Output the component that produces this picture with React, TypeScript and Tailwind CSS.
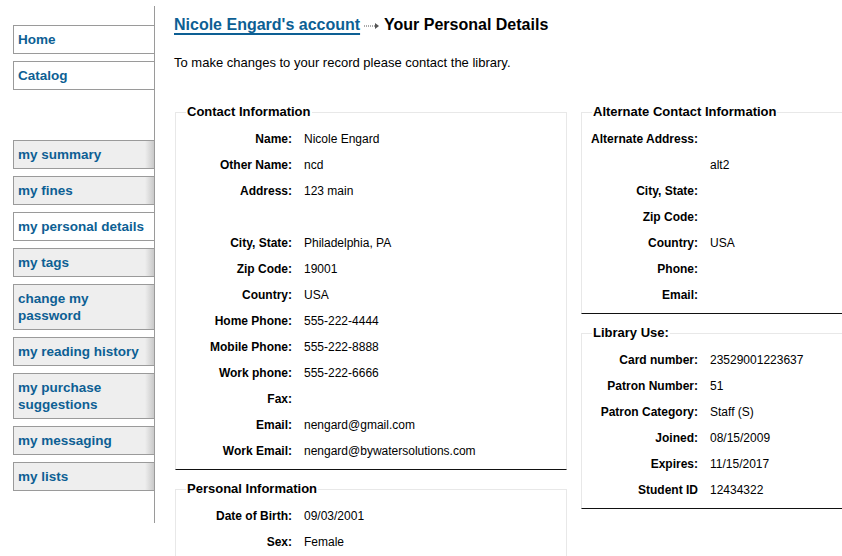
import React from "react";

const font = { fontFamily: '"Liberation Sans", Arial, Helvetica, sans-serif' };

type Tab = { label: string; active?: boolean };
const topTabs: Tab[] = [
  { label: "Home", active: true },
  { label: "Catalog", active: true },
];
const userTabs: Tab[] = [
  { label: "my summary" },
  { label: "my fines" },
  { label: "my personal details", active: true },
  { label: "my tags" },
  { label: "change my password" },
  { label: "my reading history" },
  { label: "my purchase suggestions" },
  { label: "my messaging" },
  { label: "my lists" },
];

function TabItem({ t }: { t: Tab }) {
  return (
    <div
      className={
        "ml-[13px] border-y border-l border-[#9a9a9a] pl-[4px] pr-[6px] py-[5px] text-[13.5px] leading-[17px] font-bold text-[#0d5f94] " +
        (t.active
          ? "bg-white"
          : "bg-[linear-gradient(to_right,#eeeeee_calc(100%-9px),#c9c9c9)]")
      }
    >
      {t.label}
    </div>
  );
}

type Row = [string, string];

function Rows({ rows }: { rows: Row[] }) {
  return (
    <div className="pt-[6px] pb-[5px]">
      {rows.map(([l, v], i) => (
        <div key={i} className="flex h-[26px] items-center text-[12px] text-black">
          <div className="w-[116px] shrink-0 text-right font-bold">{l}</div>
          <div className="ml-[12px] whitespace-nowrap">{v}</div>
        </div>
      ))}
    </div>
  );
}

function Fieldset({
  legend,
  rows,
  className = "",
}: {
  legend: string;
  rows: Row[];
  className?: string;
}) {
  return (
    <fieldset
      className={
        "border-x border-t border-b border-x-[#e8e8e8] border-t-[#e8e8e8] border-b-[#111] p-0 m-0 min-w-0 " +
        className
      }
    >
      <legend className="ml-[10px] px-[1px] text-[13px] leading-[16px] font-bold text-black">
        {legend}
      </legend>
      <Rows rows={rows} />
    </fieldset>
  );
}

export default function App() {
  return (
    <div className="w-[842px] h-[556px] overflow-hidden bg-white flex" style={font}>
      {/* Sidebar */}
      <div className="w-[155px] shrink-0 mt-[6px] h-[517px] border-r border-[#9a9a9a] pt-[19px] flex flex-col">
        <div className="flex flex-col gap-[7px]">
          {topTabs.map((t) => (
            <TabItem key={t.label} t={t} />
          ))}
        </div>
        <div className="flex flex-col gap-[7px] mt-[50px]">
          {userTabs.map((t) => (
            <TabItem key={t.label} t={t} />
          ))}
        </div>
      </div>

      {/* Main */}
      <div className="pl-[19px] pt-[15px] flex-1 min-w-0">
        <div className="flex items-center h-[20px] text-[16px] font-bold whitespace-nowrap">
          <span className="text-[#0d5f94] underline decoration-2 underline-offset-[3px]">
            Nicole Engard's account
          </span>
          <svg width="16" height="8" viewBox="0 0 16 8" className="mx-[4px] mt-[1px]">
            <line x1="0" y1="4" x2="11" y2="4" stroke="#555" strokeWidth="1" strokeDasharray="1 1" />
            <path d="M11 1 L15 4 L11 7 Z" fill="#555" />
          </svg>
          <span className="text-black">Your Personal Details</span>
        </div>
        <p className="mt-[20px] text-[13px] leading-[16px] text-black">
          To make changes to your record please contact the library.
        </p>

        <div className="mt-[33px] flex gap-[14px] items-start">
          <div className="w-[392px] shrink-0 ml-[1px] flex flex-col gap-[11px]">
            <Fieldset
              legend="Contact Information"
              rows={[
                ["Name:", "Nicole Engard"],
                ["Other Name:", "ncd"],
                ["Address:", "123 main"],
                ["", ""],
                ["City, State:", "Philadelphia, PA"],
                ["Zip Code:", "19001"],
                ["Country:", "USA"],
                ["Home Phone:", "555-222-4444"],
                ["Mobile Phone:", "555-222-8888"],
                ["Work phone:", "555-222-6666"],
                ["Fax:", ""],
                ["Email:", "nengard@gmail.com"],
                ["Work Email:", "nengard@bywatersolutions.com"],
              ]}
            />
            <Fieldset
              legend="Personal Information"
              rows={[
                ["Date of Birth:", "09/03/2001"],
                ["Sex:", "Female"],
                ["", ""],
              ]}
            />
          </div>
          <div className="w-[300px] shrink-0 flex flex-col gap-[11px]">
            <Fieldset
              legend="Alternate Contact Information"
              rows={[
                ["Alternate Address:", ""],
                ["", "alt2"],
                ["City, State:", ""],
                ["Zip Code:", ""],
                ["Country:", "USA"],
                ["Phone:", ""],
                ["Email:", ""],
              ]}
            />
            <Fieldset
              legend="Library Use:"
              rows={[
                ["Card number:", "23529001223637"],
                ["Patron Number:", "51"],
                ["Patron Category:", "Staff (S)"],
                ["Joined:", "08/15/2009"],
                ["Expires:", "11/15/2017"],
                ["Student ID", "12434322"],
              ]}
            />
          </div>
        </div>
      </div>
    </div>
  );
}
